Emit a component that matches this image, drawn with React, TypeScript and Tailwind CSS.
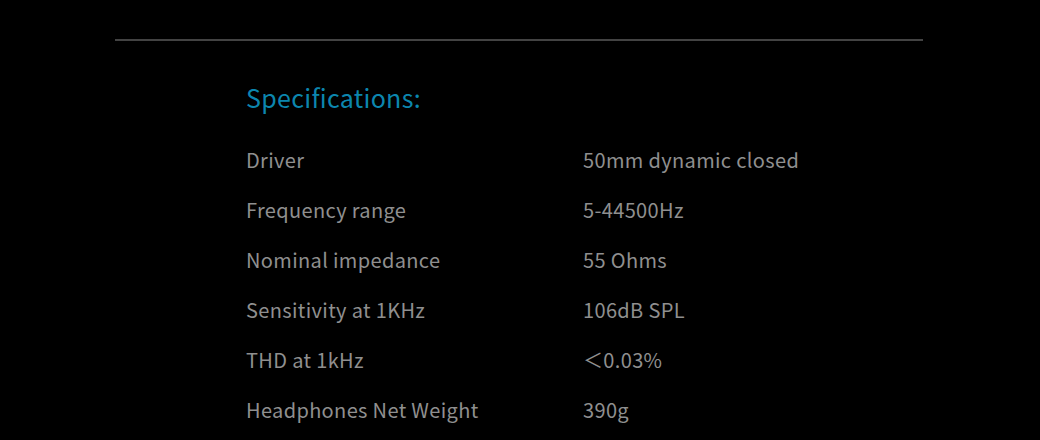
const specs = [
  { label: 'Driver', value: '50mm dynamic closed' },
  { label: 'Frequency range', value: '5-44500Hz' },
  { label: 'Nominal impedance', value: '55 Ohms' },
  { label: 'Sensitivity at 1KHz', value: '106dB SPL' },
  { label: 'THD at 1kHz', value: '＜0.03%' },
  { label: 'Headphones Net Weight', value: '390g' },
];

export default function App() {
  return (
    <div
      className="min-h-[440px] w-full bg-black overflow-hidden"
      style={{ fontFamily: '"Noto Sans CJK SC", "Noto Sans", sans-serif' }}
    >
      <div className="ml-[115px] w-[808px] pt-[39px]">
        <div className="h-[2px] bg-[#434343]" />
        <div className="pl-[131px] pt-[36px]">
          <h2 className="text-[25px] leading-[40px] tracking-[0.3px] text-[#0c86ae]">Specifications:</h2>
          <div className="mt-[18px]">
            {specs.map((s) => (
              <div
                key={s.label}
                className="flex h-[50px] items-center text-[20px] tracking-[0.35px] text-[#8f8f8f]"
              >
                <span className="w-[337px]">{s.label}</span>
                <span>{s.value}</span>
              </div>
            ))}
          </div>
        </div>
      </div>
    </div>
  );
}
